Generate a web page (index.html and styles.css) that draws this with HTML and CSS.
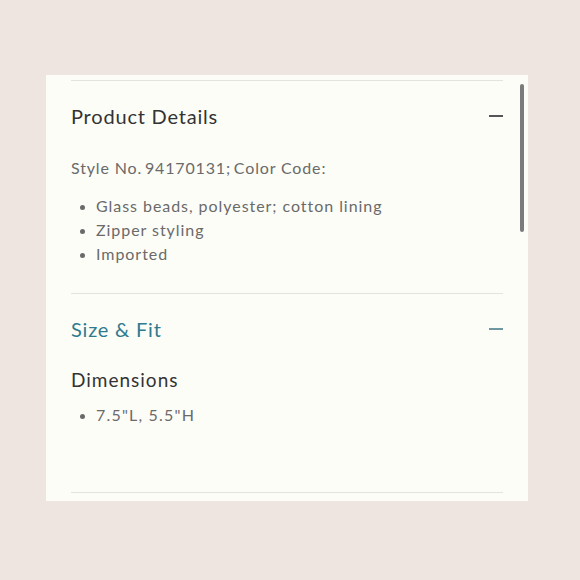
FILE: index.html
```html
<!DOCTYPE html>
<html>
<head>
<meta charset="utf-8">
<link rel="stylesheet" href="styles.css">
</head>
<body>
<div class="card">
  <div class="inner">
    <hr class="rule">
    <section class="section">
      <div class="head">
        <h2 class="title">Product Details</h2>
        <span class="minus"></span>
      </div>
      <p class="style-no">Style No.&#8201;94170131;&#8201;Color Code:</p>
      <ul class="list list-details">
        <li>Glass beads, polyester; cotton lining</li>
        <li>Zipper styling</li>
        <li>Imported</li>
      </ul>
    </section>
    <hr class="rule">
    <section class="section">
      <div class="head head-fit">
        <h2 class="title title-teal">Size &amp; Fit</h2>
        <span class="minus minus-teal"></span>
      </div>
      <h3 class="sub">Dimensions</h3>
      <ul class="list list-dims">
        <li>7.5"L, 5.5"H</li>
      </ul>
    </section>
    <hr class="rule rule-bottom">
  </div>
  <div class="scrollbar"></div>
</div>
</body>
</html>
```

FILE: styles.css
```css
* { box-sizing: border-box; }
html, body { margin: 0; padding: 0; }
body {
  background: #efe5e0;
  width: 580px;
  height: 580px;
  font-family: Lato, "Noto Sans", sans-serif;
}
.card {
  position: relative;
  margin: 75px 0 0 46px;
  width: 482px;
  height: 426px;
  background: #fdfdf8;
  overflow: hidden;
}
.inner {
  padding: 5px 25px 0 25px;
}
.rule {
  margin: 0;
  border: 0;
  height: 1px;
  background: #e4e4de;
}
.head {
  display: flex;
  align-items: center;
  justify-content: space-between;
  padding-top: 23px;
}
.title {
  margin: 0;
  font-size: 20px;
  line-height: 24px;
  font-weight: 400;
  color: #333333;
  letter-spacing: 0.8px;
}
.title-teal { color: #2f7b8e; }
.minus {
  display: block;
  width: 14px;
  height: 2px;
  background: #555;
}
.minus-teal { background: #6e97a2; }
.style-no {
  margin: 28px 0 0 0;
  font-size: 16px;
  line-height: 24px;
  color: #6a6a6a;
  letter-spacing: 0.85px;
}
.list {
  margin: 14px 0 0 0;
  padding: 0 0 0 25px;
  font-size: 16px;
  line-height: 24px;
  color: #6a6a6a;
  letter-spacing: 0.95px;
}
.list li::marker { font-size: 14px; }
.list-details { margin-bottom: 27px; }
.sub {
  margin: 27px 0 0 0;
  font-size: 19px;
  line-height: 24px;
  font-weight: 400;
  color: #333333;
  letter-spacing: 1px;
}
.list-dims {
  margin-top: 11px;
  letter-spacing: 1.2px;
  height: 89px;
}
.scrollbar {
  position: absolute;
  right: 4px;
  top: 9px;
  width: 4px;
  height: 148px;
  border-radius: 2px;
  background: #7b7b7b;
}
```
